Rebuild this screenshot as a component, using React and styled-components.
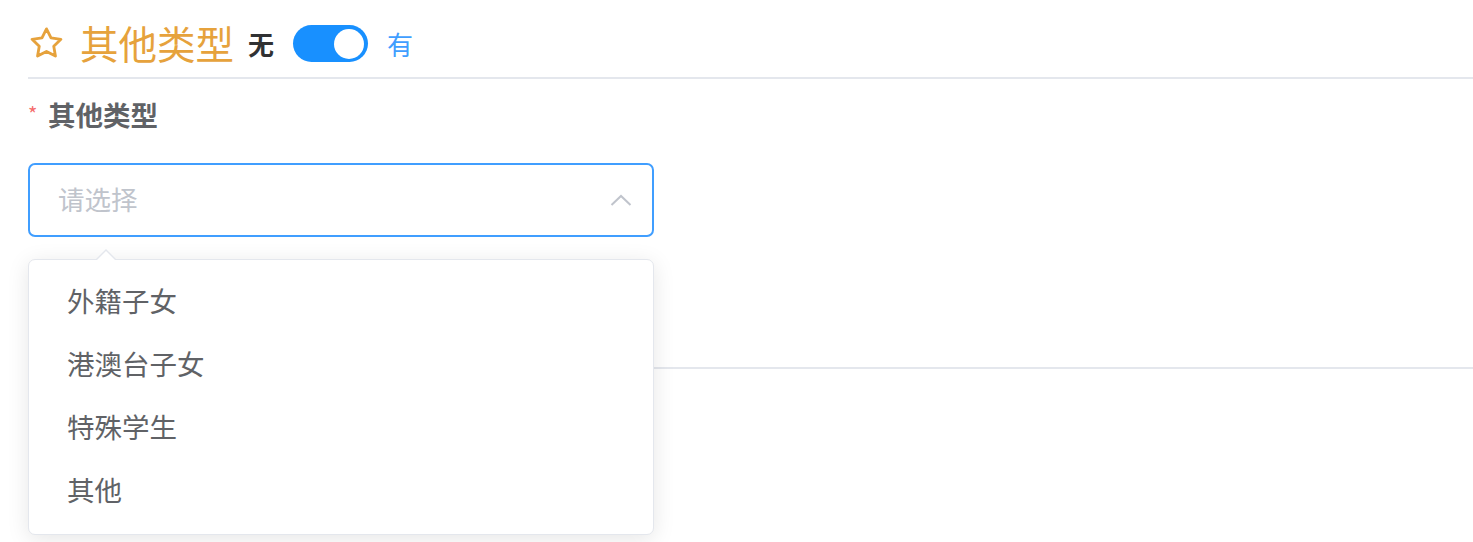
import React from "react";
import styled, { createGlobalStyle } from "styled-components";

const GlobalStyle = createGlobalStyle`
  html, body {
    margin: 0;
    padding: 0;
    background: #ffffff;
    font-family: "Noto Sans CJK SC", "Noto Sans", sans-serif;
  }
  * { box-sizing: border-box; }
`;

const Page = styled.div`
  padding-left: 28px;
  width: 1473px;
  height: 542px;
  overflow: hidden;
`;

const TitleRow = styled.div`
  display: flex;
  align-items: center;
  height: 37px;
  margin-top: 25px;
  box-sizing: content-box;
  padding-bottom: 15px;
  border-bottom: 2px solid #e4e7ed;
`;

const StarIcon = styled.svg`
  width: 35px;
  height: 34px;
  margin-left: 1px;
  padding-bottom: 2px;
  flex: none;
`;

const Title = styled.span`
  font-size: 38.5px;
  line-height: 38px;
  padding-bottom: 4px;
  color: #e6a23c;
  margin-left: 16px;
  white-space: nowrap;
`;

const SwitchLabel = styled.span`
  font-size: 26px;
  line-height: 30px;
  color: ${(p) => (p.$active ? "#409eff" : "#303133")};
  margin-left: ${(p) => (p.$first ? "14px" : "19px")};
  font-weight: ${(p) => (p.$bold ? 700 : 400)};
`;

const SwitchTrack = styled.div`
  position: relative;
  width: 75px;
  height: 37px;
  border-radius: 19px;
  background: #1890ff;
  margin-left: 19px;
  flex: none;
`;

const SwitchKnob = styled.div`
  position: absolute;
  top: 3.5px;
  right: 4px;
  width: 30px;
  height: 30px;
  border-radius: 50%;
  background: #ffffff;
`;

const FormSection = styled.div`
  padding-bottom: 130px;
  border-bottom: 2px solid #e4e7ed;
`;

const Label = styled.div`
  margin-top: 15px;
  height: 40px;
  display: flex;
  align-items: center;
  font-size: 27.5px;
  font-weight: 700;
  color: #606266;
`;

const Required = styled.span`
  color: #f56c6c;
  font-size: 20px;
  font-weight: 400;
  width: 20px;
  align-self: flex-start;
  margin-top: 5px;
`;

const SelectWrap = styled.div`
  position: relative;
  width: 626px;
  margin-top: 29px;
`;

const SelectBox = styled.div`
  height: 74px;
  border: 2px solid #409eff;
  border-radius: 7px;
  display: flex;
  align-items: center;
  justify-content: space-between;
  padding: 0 20px 0 28px;
  background: #fff;
`;

const Placeholder = styled.span`
  font-size: 26.5px;
  line-height: 36px;
  padding-bottom: 3px;
  color: #c0c4cc;
`;

const Chevron = styled.svg`
  width: 22px;
  height: 12px;
`;

const Dropdown = styled.div`
  position: absolute;
  top: calc(100% + 22px);
  left: 0;
  width: 626px;
  background: #fff;
  border: 1.5px solid #e4e7ed;
  border-radius: 7px;
  box-shadow: 0 4px 22px rgba(0, 0, 0, 0.1);
  padding: 9px 0 13px;
  z-index: 10;
`;

const ArrowOuter = styled.div`
  position: absolute;
  top: -11px;
  left: 66px;
  width: 0;
  height: 0;
  border-left: 11px solid transparent;
  border-right: 11px solid transparent;
  border-bottom: 11px solid #e4e7ed;
`;

const ArrowInner = styled.div`
  position: absolute;
  top: -9px;
  left: 67.5px;
  width: 0;
  height: 0;
  border-left: 9.5px solid transparent;
  border-right: 9.5px solid transparent;
  border-bottom: 9.5px solid #ffffff;
`;

const Option = styled.div`
  height: 63px;
  line-height: 63px;
  padding: 0 38px;
  font-size: 27.5px;
  color: #606266;
  white-space: nowrap;
`;

const options = ["外籍子女", "港澳台子女", "特殊学生", "其他"];

export default function App() {
  return (
    <>
      <GlobalStyle />
      <Page>
        <TitleRow>
          <StarIcon viewBox="0 0 35 34">
            <polygon
              points="17.5,2 22.3,11.6 32.8,13.1 25.2,20.4 27,30.9 17.5,25.9 8,30.9 9.8,20.4 2.2,13.1 12.7,11.6"
              fill="none"
              stroke="#e6a23c"
              strokeWidth="3"
              strokeLinejoin="round"
            />
          </StarIcon>
          <Title>其他类型</Title>
          <SwitchLabel $bold $first>无</SwitchLabel>
          <SwitchTrack>
            <SwitchKnob />
          </SwitchTrack>
          <SwitchLabel $active>有</SwitchLabel>
        </TitleRow>
        <FormSection>
          <Label>
            <Required>*</Required>
            其他类型
          </Label>
          <SelectWrap>
            <SelectBox>
              <Placeholder>请选择</Placeholder>
              <Chevron viewBox="0 0 22 12">
                <polyline
                  points="1.5,11 11,2 20.5,11"
                  fill="none"
                  stroke="#c0c4cc"
                  strokeWidth="2"
                />
              </Chevron>
            </SelectBox>
            <Dropdown>
              <ArrowOuter />
              <ArrowInner />
              {options.map((o) => (
                <Option key={o}>{o}</Option>
              ))}
            </Dropdown>
          </SelectWrap>
        </FormSection>
      </Page>
    </>
  );
}
